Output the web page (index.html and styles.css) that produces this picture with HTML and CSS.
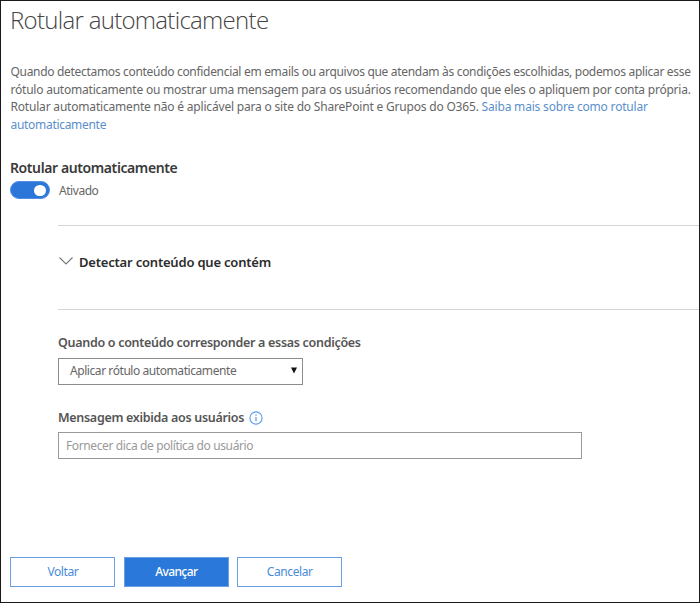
FILE: index.html
```html
<!DOCTYPE html>
<html lang="pt">
<head>
<meta charset="utf-8">
<title>Rotular automaticamente</title>
<link rel="stylesheet" href="styles.css">
</head>
<body>
<main class="panel">
  <h1 class="title">Rotular automaticamente</h1>
  <p class="intro">
    <span class="line line-1">Quando detectamos conteúdo confidencial em emails ou arquivos que atendam às condições escolhidas, podemos aplicar esse</span>
    <span class="line line-2">rótulo automaticamente ou mostrar uma mensagem para os usuários recomendando que eles o apliquem por conta própria.</span>
    <span class="line line-3">Rotular automaticamente não é aplicável para o site do SharePoint e Grupos do O365. <a class="link">Saiba mais sobre como rotular</a></span>
    <span class="line line-4"><a class="link">automaticamente</a></span>
  </p>
  <h2 class="subtitle"><span>Rotular automaticamente</span></h2>
  <div class="toggle-row">
    <span class="toggle"><span class="knob"></span></span>
    <span class="state">Ativado</span>
  </div>
  <section class="settings">
    <div class="detect">
      <svg class="chevron" width="16" height="10" viewBox="0 0 16 10"><path d="M1.5 1.5 8 8 14.5 1.5" fill="none" stroke="#777" stroke-width="1.1"/></svg>
      <span class="detect-text">Detectar conteúdo que contém</span>
    </div>
    <div class="label label-when"><span>Quando o conteúdo corresponder a essas condições</span></div>
    <div class="select">
      <span class="select-text">Aplicar rótulo automaticamente</span>
      <svg class="arrow" width="6" height="7" viewBox="0 0 6 7"><path d="M0 0.5H6L3 6.5Z" fill="#111"/></svg>
    </div>
    <div class="label label-message">
      <span>Mensagem exibida aos usuários</span>
      <svg class="info" width="14" height="14" viewBox="0 0 14 14"><circle cx="7" cy="7" r="6.1" fill="none" stroke="#5b9bea" stroke-width="1.1"/><path d="M7 6v4.3M7 3.6v1.2" stroke="#4a8ce0" stroke-width="1.1"/></svg>
    </div>
    <div class="input"><span class="placeholder">Fornecer dica de política do usuário</span></div>
  </section>
  <div class="buttons">
    <div class="button back"><span>Voltar</span></div>
    <div class="button primary"><span>Avançar</span></div>
    <div class="button cancel"><span>Cancelar</span></div>
  </div>
</main>
</body>
</html>
```
FILE: styles.css
```css
* { box-sizing: border-box; }
body { margin: 0; background: #fff; font-family: "Noto Sans", "Open Sans", sans-serif; font-size: 12px; color: #666; }
.panel { width: 700px; height: 603px; border: 1px solid #1a1a1a; padding-left: 9px; display: flex; flex-direction: column; overflow: hidden; white-space: nowrap; }
.title { margin: 2px 0 0; height: 34px; line-height: 34px; font-family: "Open Sans", sans-serif; font-size: 24px; font-weight: 300; color: #444; letter-spacing: -0.7px; }
.intro { margin: 26px 0 0; height: 70px; font-size: 12px; padding-left: 0.5px; }
.line { display: block; height: 17.5px; line-height: 17.5px; }
.line-1 { letter-spacing: -0.31px; }
.line-2 { letter-spacing: -0.22px; }
.line-3 { letter-spacing: -0.19px; }
.line-4 { letter-spacing: -0.3px; }
.link { color: #5b8fcb; }
.subtitle { margin: 25px 0 0; height: 20px; line-height: 20px; font-size: 14px; font-weight: 600; color: #3a3a3a; letter-spacing: -0.4px; }
.toggle-row { display: flex; align-items: center; height: 18px; margin-top: 3px; }
.toggle { width: 40px; height: 18px; border: 1px solid #4f8fe6; border-radius: 9px; background: #2a76d9; display: flex; justify-content: flex-end; align-items: center; padding-right: 3px; }
.knob { width: 12px; height: 11px; border-radius: 6px; background: #fff; }
.state { margin-left: 9px; letter-spacing: -0.45px; }
.settings { margin-left: 48px; margin-top: 26px; }
.detect { height: 85px; border-top: 1px solid #d4d4d4; border-bottom: 1px solid #d4d4d4; display: flex; align-items: center; padding-bottom: 11px; }
.chevron { margin-left: -0.5px; margin-top: -2px; }
.detect-text { margin-left: 5.5px; font-size: 13px; font-weight: 600; color: #2c2c2c; letter-spacing: -0.2px; }
.label { height: 18px; line-height: 18px; font-weight: 600; color: #555; font-size: 12.5px; display: flex; align-items: center; letter-spacing: -0.3px; }
.label-when { margin-top: 24px; }
.select { width: 245px; height: 27px; margin-top: 6px; border: 1px solid #8c8c8c; display: flex; align-items: center; justify-content: space-between; padding: 0 5px 2px 11px; letter-spacing: -0.43px; }
.label-message { margin-top: 24px; }
.info { margin-left: 5px; margin-top: -1px; }
.input { width: 524px; height: 27px; margin-top: 5px; border: 1px solid #999; display: flex; align-items: center; padding-left: 7px; color: #999; letter-spacing: -0.38px; }
.buttons { display: flex; gap: 8.4px; margin-top: 98px; padding-left: 0.4px; }
.button { width: 105px; height: 30px; border: 1px solid #69a0e7; color: #4a8bdc; display: flex; align-items: center; justify-content: center; padding-bottom: 1px; letter-spacing: -0.4px; }
.primary { background: #2a78d9; color: #fff; font-weight: 500; letter-spacing: -0.6px; }
```
